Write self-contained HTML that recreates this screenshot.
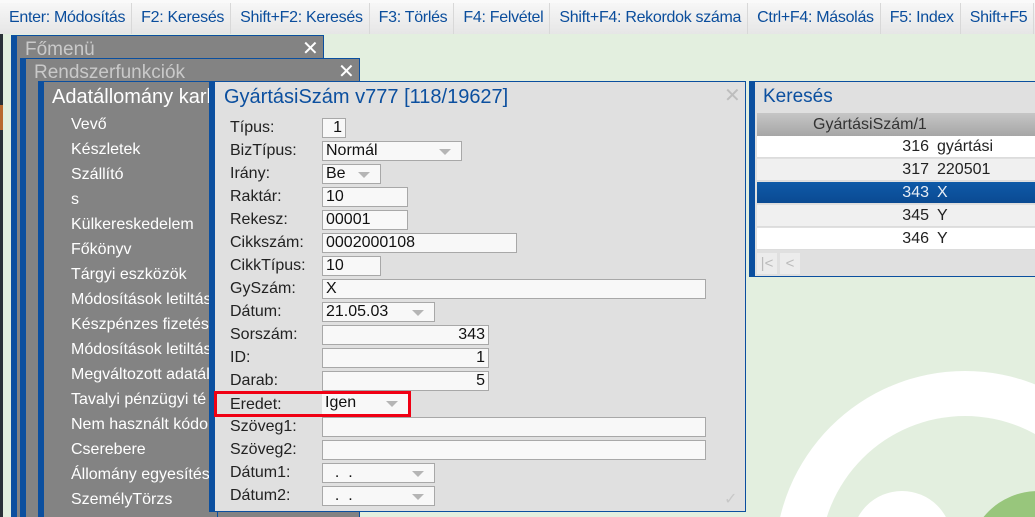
<!DOCTYPE html>
<html style="width:1035px;height:517px;overflow:hidden"><head><meta charset="utf-8"><style>
*{margin:0;padding:0;box-sizing:border-box}
body{width:1035px;height:517px;overflow:hidden;position:relative;background:#e3efdf;font-family:"Liberation Sans",Arial,sans-serif;font-size:16px;color:#222}
.tb{position:absolute;left:0;top:0;width:1035px;height:34px;background:linear-gradient(#f7f7f7,#e6e6e6);border-top:3px solid #fafafa;white-space:nowrap;overflow:hidden}
.tb span{display:inline-block;height:31px;line-height:30px;padding:0 6px 0 9px;color:#0a4d9c;border-right:1px solid #d8d8d8;font-size:16px;letter-spacing:-0.3px}
.abs{position:absolute}
.win{position:absolute;background:#838383;border:1px solid #0b4f9f;border-left:6px solid #0b4f9f;border-bottom:none}
.wt{position:absolute;font-size:19px;color:#c9c9c9}
.x{position:absolute;color:#fff;font-size:20px}
.menu div{position:absolute;left:71px;color:#fff;font-size:16px;white-space:nowrap}
.dlg{position:absolute;left:209px;top:81px;width:537px;height:431px;background:#e0e0e0;border:1px solid #0b4f9f;border-left:6px solid #0b4f9f}
.lb{position:absolute;left:230px;font-size:16px;color:#222}
.f{position:absolute;left:322px;height:20px;background:#f8f8f8;border:1px solid #a8a8a8;font-size:16px;line-height:18px;padding:0 3px;color:#111}
.r{text-align:right}
.dd::after{content:"";position:absolute;right:10px;top:7px;border-left:6px solid transparent;border-right:6px solid transparent;border-top:6px solid #b5b5b5}
.ks{position:absolute;left:749px;top:81px;width:286px;height:196px;background:#e0e0e0;border:1px solid #0b4f9f;border-left:6px solid #0b4f9f;border-right:none}
.row{position:absolute;left:757px;width:278px;height:22px;line-height:22px;font-size:16px;border-bottom:1px solid #dcdcdc}
.row .n{position:absolute;right:106px}
.row .t{position:absolute;left:180px}
</style></head><body>
<div class="abs" style="left:0;top:34px;width:3px;height:483px;background:#2a3138"></div>
<div class="abs" style="left:0;top:105px;width:3px;height:25px;background:#b8692f"></div>
<div class="abs" style="left:775px;top:371px;width:260px;height:146px;overflow:hidden">
<div class="abs" style="left:0;top:0;width:380px;height:380px;border-radius:50%;background:#fff"></div>
<div class="abs" style="left:45px;top:45px;width:290px;height:290px;border-radius:50%;background:#e3efdf"></div>
<div class="abs" style="left:77px;top:120px;width:100px;height:100px;border-radius:50%;background:#fff"></div>
<div class="abs" style="left:193px;top:120px;width:140px;height:140px;border-radius:50%;background:#98c67c"></div>
</div>

<div class="tb"><span>Enter: Módosítás</span><span>F2: Keresés</span><span>Shift+F2: Keresés</span><span>F3: Törlés</span><span>F4: Felvétel</span><span>Shift+F4: Rekordok száma</span><span>Ctrl+F4: Másolás</span><span>F5: Index</span><span>Shift+F5</span></div>

<div class="win" style="left:11px;top:35px;width:313px;height:482px"></div>
<div class="wt" style="left:25px;top:39px">Főmenü</div>
<div class="x" style="left:302px;top:36px">✕</div>
<div class="win" style="left:20px;top:58px;width:340px;height:459px"></div>
<div class="wt" style="left:34px;top:62px">Rendszerfunkciók</div>
<div class="x" style="left:338px;top:59px">✕</div>
<div class="win" style="left:38px;top:81px;width:180px;height:436px"></div>
<div class="wt" style="left:52px;top:86px;color:#fff;font-size:20px;white-space:nowrap;width:157px;overflow:hidden">Adatállomány karb</div>
<div class="menu">
<div style="top:116px">Vevő</div><div style="top:141px">Készletek</div><div style="top:166px">Szállító</div><div style="top:191px">s</div><div style="top:216px">Külkereskedelem</div><div style="top:241px">Főkönyv</div><div style="top:266px">Tárgyi eszközök</div><div style="top:291px">Módosítások letiltás</div><div style="top:316px">Készpénzes fizetés</div><div style="top:341px">Módosítások letiltás</div><div style="top:366px">Megváltozott adatáll</div><div style="top:391px">Tavalyi pénzügyi té</div><div style="top:416px">Nem használt kódol</div><div style="top:441px">Cserebere</div><div style="top:466px">Állomány egyesítés</div><div style="top:491px">SzemélyTörzs</div>
</div>

<div class="dlg"></div>
<div class="abs" style="left:224px;top:86px;font-size:20px;color:#0b4f9f">GyártásiSzám v777 [118/19627]</div>
<div class="abs" style="left:724px;top:83px;font-size:20px;color:#bdbdbd">✕</div>
<div class="abs" style="left:724px;top:489px;font-size:16px;color:#c8c8c8">✓</div>

<div class="lb" style="top:119px">Típus:</div><div class="f r" style="top:118px;width:24px">1</div>
<div class="lb" style="top:142px">BizTípus:</div><div class="f dd" style="top:141px;width:140px">Normál</div>
<div class="lb" style="top:165px">Irány:</div><div class="f dd" style="top:164px;width:59px">Be</div>
<div class="lb" style="top:188px">Raktár:</div><div class="f" style="top:187px;width:86px">10</div>
<div class="lb" style="top:211px">Rekesz:</div><div class="f" style="top:210px;width:86px">00001</div>
<div class="lb" style="top:234px">Cikkszám:</div><div class="f" style="top:233px;width:195px">0002000108</div>
<div class="lb" style="top:257px">CikkTípus:</div><div class="f" style="top:256px;width:59px">10</div>
<div class="lb" style="top:280px">GySzám:</div><div class="f" style="top:279px;width:384px">X</div>
<div class="lb" style="top:303px">Dátum:</div><div class="f dd" style="top:302px;width:113px">21.05.03</div>
<div class="lb" style="top:326px">Sorszám:</div><div class="f r" style="top:325px;width:167px">343</div>
<div class="lb" style="top:349px">ID:</div><div class="f r" style="top:348px;width:167px">1</div>
<div class="lb" style="top:372px">Darab:</div><div class="f r" style="top:371px;width:167px">5</div>
<div class="abs" style="left:214px;top:391px;width:197px;height:26px;border:3px solid #f00014"></div>
<div class="lb" style="top:396px">Eredet:</div><div class="f dd" style="top:394px;width:86px;border:none;background:#f8f8f8">Igen</div>
<div class="lb" style="top:418px">Szöveg1:</div><div class="f" style="top:417px;width:384px"></div>
<div class="lb" style="top:441px">Szöveg2:</div><div class="f" style="top:440px;width:384px"></div>
<div class="lb" style="top:464px">Dátum1:</div><div class="f dd" style="top:463px;width:113px">&nbsp;&nbsp;.&nbsp;&nbsp;.</div>
<div class="lb" style="top:487px">Dátum2:</div><div class="f dd" style="top:486px;width:113px">&nbsp;&nbsp;.&nbsp;&nbsp;.</div>

<div class="ks"></div>
<div class="abs" style="left:763px;top:86px;font-size:19px;color:#0b4f9f">Keresés</div>
<div class="abs" style="left:757px;top:113px;width:278px;height:23px;background:linear-gradient(#c6c6c6,#a6a6a6);line-height:23px;padding-left:56px;font-size:16px;color:#333">GyártásiSzám/1</div>
<div class="row" style="top:136px;background:#fff"><span class="n">316</span><span class="t">gyártási</span></div>
<div class="row" style="top:159px;background:#f0f0f0"><span class="n">317</span><span class="t">220501</span></div>
<div class="row" style="top:182px;background:linear-gradient(#0f5aa8,#0a4a92);color:#e8eef6"><span class="n">343</span><span class="t">X</span></div>
<div class="row" style="top:205px;background:#f0f0f0"><span class="n">345</span><span class="t">Y</span></div>
<div class="row" style="top:228px;background:#fff"><span class="n">346</span><span class="t">Y</span></div>
<div class="abs" style="left:757px;top:253px;width:20px;height:21px;background:#ececec;color:#bbb;font-size:15px;text-align:center;line-height:21px">|&lt;</div>
<div class="abs" style="left:780px;top:253px;width:20px;height:21px;background:#ececec;color:#bbb;font-size:15px;text-align:center;line-height:21px">&lt;</div>
</body></html>
